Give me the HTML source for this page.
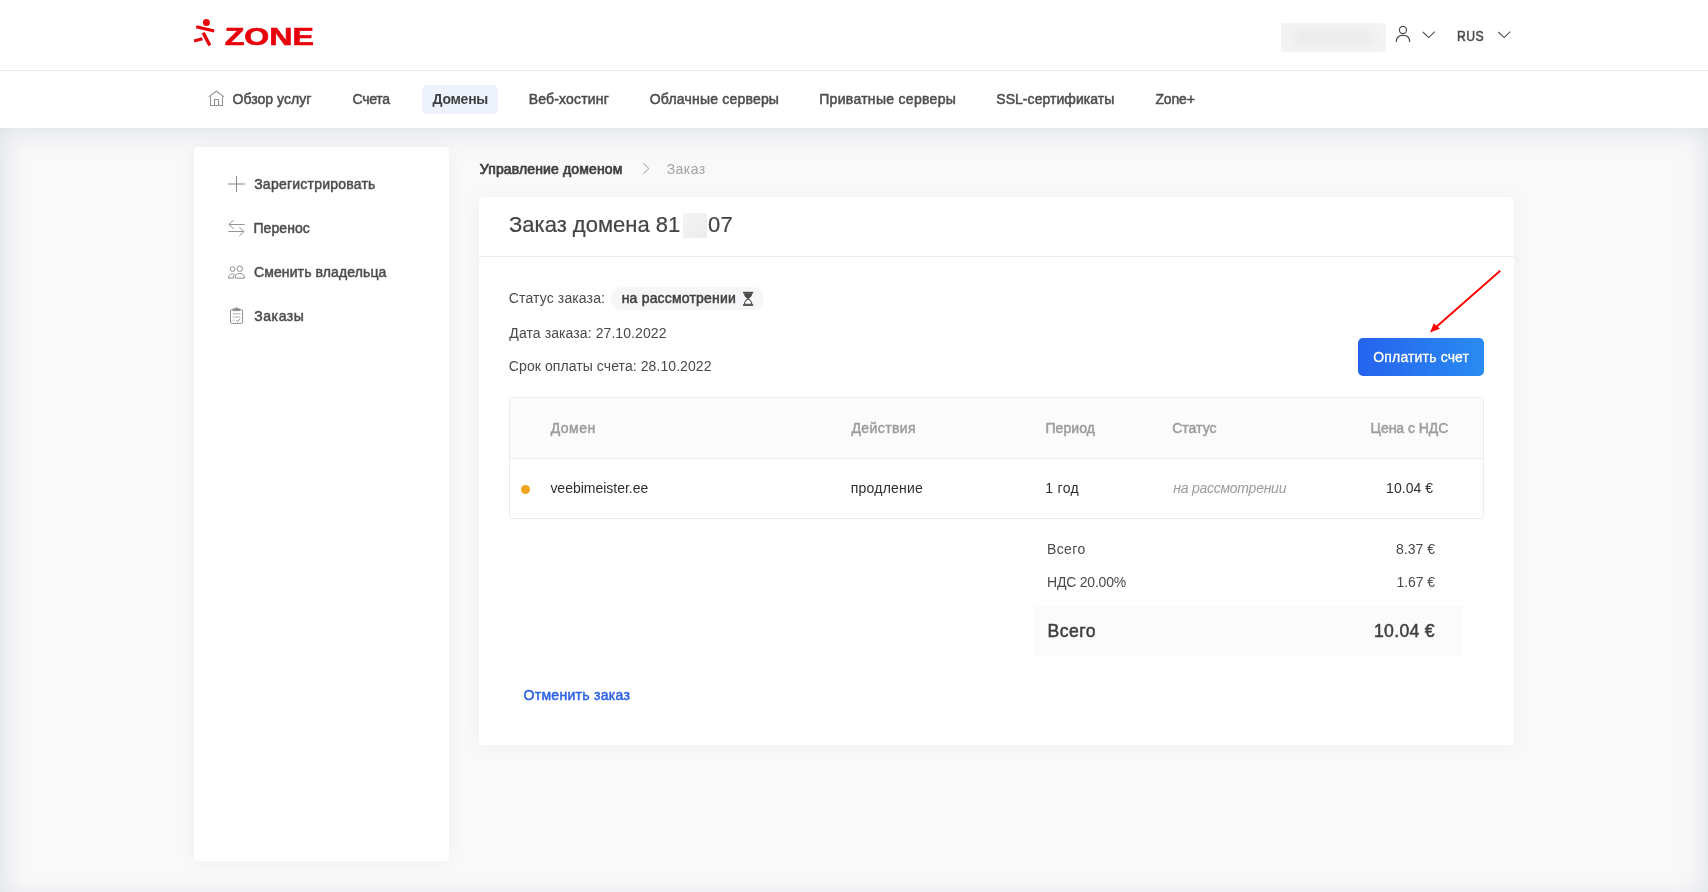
<!DOCTYPE html>
<html lang="ru">
<head>
<meta charset="utf-8">
<title>Заказ домена</title>
<style>
*{box-sizing:border-box;margin:0;padding:0}
html,body{width:1708px;height:892px;overflow:hidden;background:#fff}
body{font-family:"Liberation Sans",sans-serif;font-size:14px;color:#4a4a4a;position:relative}
.abs,.t{position:absolute}
.t{white-space:nowrap;line-height:20px;height:20px}
.m{-webkit-text-stroke:0.5px currentColor}
.mm{-webkit-text-stroke:0.7px currentColor}
.b{font-weight:bold}
a.t{text-decoration:none}
.nv{color:#4d4d4d}
.th{color:#9d9d9d}
.td{color:#2f2f2f}
.ttl{font-size:22px;font-weight:normal;line-height:30px;height:30px;color:#444;-webkit-text-stroke:0.2px currentColor}
.big{font-size:17.600px;line-height:24px;height:24px;color:#3f3f3f}
#header{position:absolute;left:0;top:0;width:1708px;height:71px;background:#fff;border-bottom:1px solid #e9ebf1}
#nav{position:absolute;left:0;top:71px;width:1708px;height:57px;background:#fff}
#main{position:absolute;left:0;top:128px;width:1708px;height:774px;background:#f9f9fa;box-shadow:inset 0 0 28px rgba(140,153,168,.29)}
.card{position:absolute;background:#fff;border-radius:4px;box-shadow:0 1px 20px rgba(40,50,70,.042)}
</style>
</head>
<body>
<div id="header"></div>
<div id="nav"></div>
<div id="main"></div>

<!-- logo -->
<svg class="abs" style="left:190px;top:14px;will-change:transform" width="130" height="40" viewBox="0 0 130 40">
  <g fill="#e8000b">
    <circle cx="16.400" cy="8.600" r="3.500"/>
    <polygon points="6.600,11.300 24.600,15.400 23.800,18.400 5.800,14.300"/>
    <polygon points="11.700,19.500 14.700,18 21.300,30.600 18.400,32.300"/>
    <polygon points="3.700,25.600 12,23.200 12.800,26.200 4.500,28.600"/>
  </g>
  <text x="34.700" y="30.600" font-family="'Liberation Sans',sans-serif" font-weight="bold" font-size="24.200" fill="#e8000b" stroke="#e8000b" stroke-width="0.600" textLength="89.200" lengthAdjust="spacingAndGlyphs">ZONE</text>
</svg>

<!-- header right -->
<div class="abs" style="left:1281px;top:23px;width:105px;height:29px;background:#f4f4f4;box-shadow:inset 0 0 10px 6px #f4f4f4"><div style="position:absolute;left:12px;top:7px;width:80px;height:15px;background:#ebebeb;filter:blur(5px)"></div></div>

<!-- nav -->
<div class="abs" style="left:422px;top:85px;width:76px;height:29px;border-radius:5px;background:#eef2fc"></div>

<!-- sidebar -->
<div class="card" style="left:194px;top:147px;width:255px;height:714px"></div>

<!-- breadcrumb -->

<!-- main card -->
<div class="card" style="left:479px;top:197px;width:1035px;height:548px"></div>
<div class="abs" style="left:683px;top:213px;width:24px;height:25px;background:linear-gradient(135deg,#f4f4f4,#ececec)"></div>
<div class="abs" style="left:479px;top:256px;width:1035px;height:1px;background:#ebecf2"></div>

<div class="abs" style="left:611px;top:287px;width:153px;height:23px;border-radius:12px;background:#f6f6f8"></div>

<!-- arrow -->

<!-- button -->
<div class="abs" style="left:1358px;top:338px;width:126px;height:38px;border-radius:5px;background:linear-gradient(90deg,#2563ee,#2a8bf2)"></div>

<!-- table -->
<div class="abs" style="left:509px;top:397px;width:975px;height:122px;border:1px solid #ebecf2;border-radius:4px;background:#fff;overflow:hidden"><div style="height:61px;background:#fbfbfc;border-bottom:1px solid #ebecf2"></div></div>
<div class="abs" style="left:521px;top:485px;width:9px;height:9px;border-radius:50%;background:#f0a51e"></div>

<!-- totals -->
<div class="abs" style="left:1034px;top:606px;width:429px;height:50px;background:#fbfbfb"></div>

<div id="texts" style="position:absolute;left:0;top:0;width:1708px;height:892px;will-change:transform">
<div id="rus" class="t m" style="left:1456.75px;top:26px;letter-spacing:0.450px;color:#4a4a4a;font-size:14px;transform:scaleX(.87);transform-origin:0 50%">RUS</div>
<a id="n1" class="t m nv" style="left:232.50px;top:89px;letter-spacing:0.050px;">Обзор услуг</a>
<a id="n2" class="t m nv" style="left:352.50px;top:89px;letter-spacing:-0.250px;">Счета</a>
<a id="n3" class="t b" style="left:432.50px;top:89px;letter-spacing:-0.250px;color:#3f3f3f">Домены</a>
<a id="n4" class="t m nv" style="left:528.75px;top:89px;letter-spacing:0.175px;">Веб-хостинг</a>
<a id="n5" class="t m nv" style="left:649.75px;top:89px;letter-spacing:0.200px;">Облачные серверы</a>
<a id="n6" class="t m nv" style="left:819.25px;top:89px;letter-spacing:0.297px;">Приватные серверы</a>
<a id="n7" class="t m nv" style="left:996.25px;top:89px;letter-spacing:0.054px;">SSL-сертификаты</a>
<a id="n8" class="t m nv" style="left:1155.50px;top:89px;letter-spacing:-0.188px;">Zone+</a>
<a id="s1" class="t m nv" style="left:254.20px;top:174px;letter-spacing:0.227px;">Зарегистрировать</a>
<a id="s2" class="t m nv" style="left:253.45px;top:218px;letter-spacing:0.083px;">Перенос</a>
<a id="s3" class="t m nv" style="left:253.95px;top:262px;letter-spacing:0.119px;">Сменить владельца</a>
<a id="s4" class="t m nv" style="left:254.20px;top:306px;letter-spacing:0.590px;">Заказы</a>
<a id="bc1" class="t mm" style="left:479.80px;top:159px;letter-spacing:0.135px;color:#3f3f3f">Управление доменом</a>
<div id="bc2" class="t" style="left:666.65px;top:159px;letter-spacing:0.438px;color:#a3a3a3">Заказ</div>
<h1 id="h1" class="t ttl" style="left:509.05px;top:210.4px;">Заказ домена 81</h1>
<div id="h2" class="t ttl" style="left:708.10px;top:210.4px;letter-spacing:0.100px;">07</div>
<div id="st1" class="t" style="left:508.85px;top:288px;letter-spacing:0.123px;">Статус заказа:</div>
<div id="st2" class="t m" style="left:621.70px;top:288px;letter-spacing:0.189px;color:#3f3f3f">на рассмотрении</div>
<div id="st3" class="t" style="left:509.35px;top:323px;letter-spacing:0.089px;">Дата заказа: 27.10.2022</div>
<div id="st4" class="t" style="left:508.85px;top:356px;letter-spacing:0.079px;">Срок оплаты счета: 28.10.2022</div>
<div id="btn" class="t" style="left:1373.30px;top:347px;letter-spacing:0.154px;color:#fff;-webkit-text-stroke:0.3px #fff">Оплатить счет</div>
<div id="th1" class="t m th" style="left:550.65px;top:418px;letter-spacing:0.500px;">Домен</div>
<div id="th2" class="t m th" style="left:851.45px;top:418px;letter-spacing:0.400px;">Действия</div>
<div id="th3" class="t m th" style="left:1045.45px;top:418px;letter-spacing:0.070px;">Период</div>
<div id="th4" class="t m th" style="left:1172.15px;top:418px;letter-spacing:0.030px;">Статус</div>
<div id="th5" class="t m th" style="left:1370.60px;top:418px;letter-spacing:-0.050px;">Цена с НДС</div>
<div id="td1" class="t td" style="left:550.40px;top:478px;letter-spacing:-0.018px;">veebimeister.ee</div>
<div id="td2" class="t td" style="left:850.85px;top:478px;letter-spacing:0.200px;">продление</div>
<div id="td3" class="t td" style="left:1045.20px;top:478px;letter-spacing:0.338px;">1 год</div>
<div id="td4" class="t" style="left:1173.25px;top:478px;letter-spacing:-0.250px;color:#9b9b9b;font-style:italic">на рассмотрении</div>
<div id="td5" class="t td" style="left:1386.05px;top:478px;letter-spacing:0.058px;">10.04 €</div>
<div id="tt1" class="t" style="left:1047.00px;top:539px;letter-spacing:0.387px;">Всего</div>
<div id="tt2" class="t" style="left:1396.05px;top:539px;">8.37 €</div>
<div id="tt3" class="t" style="left:1047.00px;top:572px;letter-spacing:-0.211px;">НДС 20.00%</div>
<div id="tt4" class="t" style="left:1396.50px;top:572px;letter-spacing:-0.080px;">1.67 €</div>
<div id="tt5" class="t m big" style="left:1047.60px;top:619px;letter-spacing:0.450px;">Всего</div>
<div id="tt6" class="t m big" style="left:1374.00px;top:619px;letter-spacing:0.308px;">10.04 €</div>
<a id="cancel" class="t m" style="left:523.50px;top:685px;letter-spacing:0.292px;color:#2f62e6">Отменить заказ</a>
</div>

<!-- icons overlay (page coordinates) -->
<svg class="abs" style="left:0;top:0;pointer-events:none" width="1708" height="892" viewBox="0 0 1708 892" fill="none" stroke-linecap="butt">
  <!-- user -->
  <g stroke="#4d4d4d" stroke-width="1.200">
    <circle cx="1402.950" cy="30" r="3.550"/>
    <path d="M1396.300 41.900C1396.300 37.600 1399 35.400 1403 35.400S1409.700 37.600 1409.700 41.900"/>
    <path d="M1422.900 32L1428.700 37.600L1434.800 31.700" stroke-width="1.050"/>
    <path d="M1498.300 32L1504.100 37.600L1510.200 31.700" stroke-width="1.050"/>
  </g>
  <!-- home -->
  <g stroke="#939393" stroke-width="1.100">
    <path d="M208.700 96.900L216.400 91.300L224.100 96.900"/>
    <path d="M210.500 96.500V105.500H222.500V96.500"/>
    <path d="M214.500 105.500V99.500H218.500V105.500"/>
  </g>
  <!-- breadcrumb chevron -->
  <path d="M643.200 163L648.900 168.500L643.200 174" stroke="#9a9a9a" stroke-width="1"/>
  <!-- sidebar: plus -->
  <g stroke="#8a8a8a" stroke-width="1">
    <path d="M236.500 176V192"/><path d="M228.300 184H244.700" stroke="#9c9c9c" stroke-width="1.300"/>
  </g>
  <!-- sidebar: transfer arrows -->
  <g stroke="#959595" stroke-width="1">
    <path d="M244.700 224.500H229"/><path d="M233.700 220.200L228.900 224.500L233.700 228.800"/>
    <path d="M228.300 231.500H244"/><path d="M239.300 227.100L244.100 231.500L239.300 235.800"/>
  </g>
  <!-- sidebar: people -->
  <g stroke="#8e8e8e" stroke-width="1">
    <circle cx="232.600" cy="269.100" r="2.350"/>
    <circle cx="239.750" cy="268.700" r="2.750"/>
    <path d="M235 278.100C235 275.200 236.900 273.400 239.800 273.400S244.500 275.200 244.500 278.100Z"/>
    <path d="M233.600 274C231 273.300 228.400 275 228.400 278.100H233.300C233.300 276.500 233.900 275 235.200 273.900"/>
  </g>
  <!-- sidebar: clipboard -->
  <g stroke="#8e8e8e" stroke-width="1">
    <rect x="230.500" y="309.700" width="12.100" height="13.700" rx="1.300"/>
    <path d="M233 310.600V308.900H235.300C235.300 307.300 237.600 307.300 237.600 308.900H239.900V310.600Z" fill="#8e8e8e"/>
    <g stroke="#b0b0b0"><path d="M232.600 313.800H240.500"/><path d="M232.600 317.100H240.500"/><path d="M232.600 320.200H234.600"/></g>
    <path d="M236.200 320.200L237.600 321.500L240.300 318.900"/>
  </g>
  <!-- hourglass -->
  <g fill="#4a4a4a" stroke="none">
    <rect x="743" y="291.800" width="10.200" height="1.700"/>
    <rect x="743" y="304.200" width="10.200" height="1.700"/>
    <path d="M743.900 293.300H752.300C752.300 296.200 750.200 297.600 748.100 299.200C746 297.600 743.900 296.200 743.900 293.300Z"/>
  </g>
  <path d="M748.100 298.600C746.200 300 744.400 301.600 744.400 304.300H751.800C751.800 301.600 750 300 748.100 298.600Z" fill="#fff" stroke="#4a4a4a" stroke-width="1.100"/>
  <!-- red arrow -->
  <path d="M1500.200 270.700L1436.500 326.700" stroke="#fe0000" stroke-width="1.900"/>
  <path d="M1430 332.600L1433.900 323.200L1439.900 328.800Z" fill="#fe0000"/>
</svg>


</body>
</html>
